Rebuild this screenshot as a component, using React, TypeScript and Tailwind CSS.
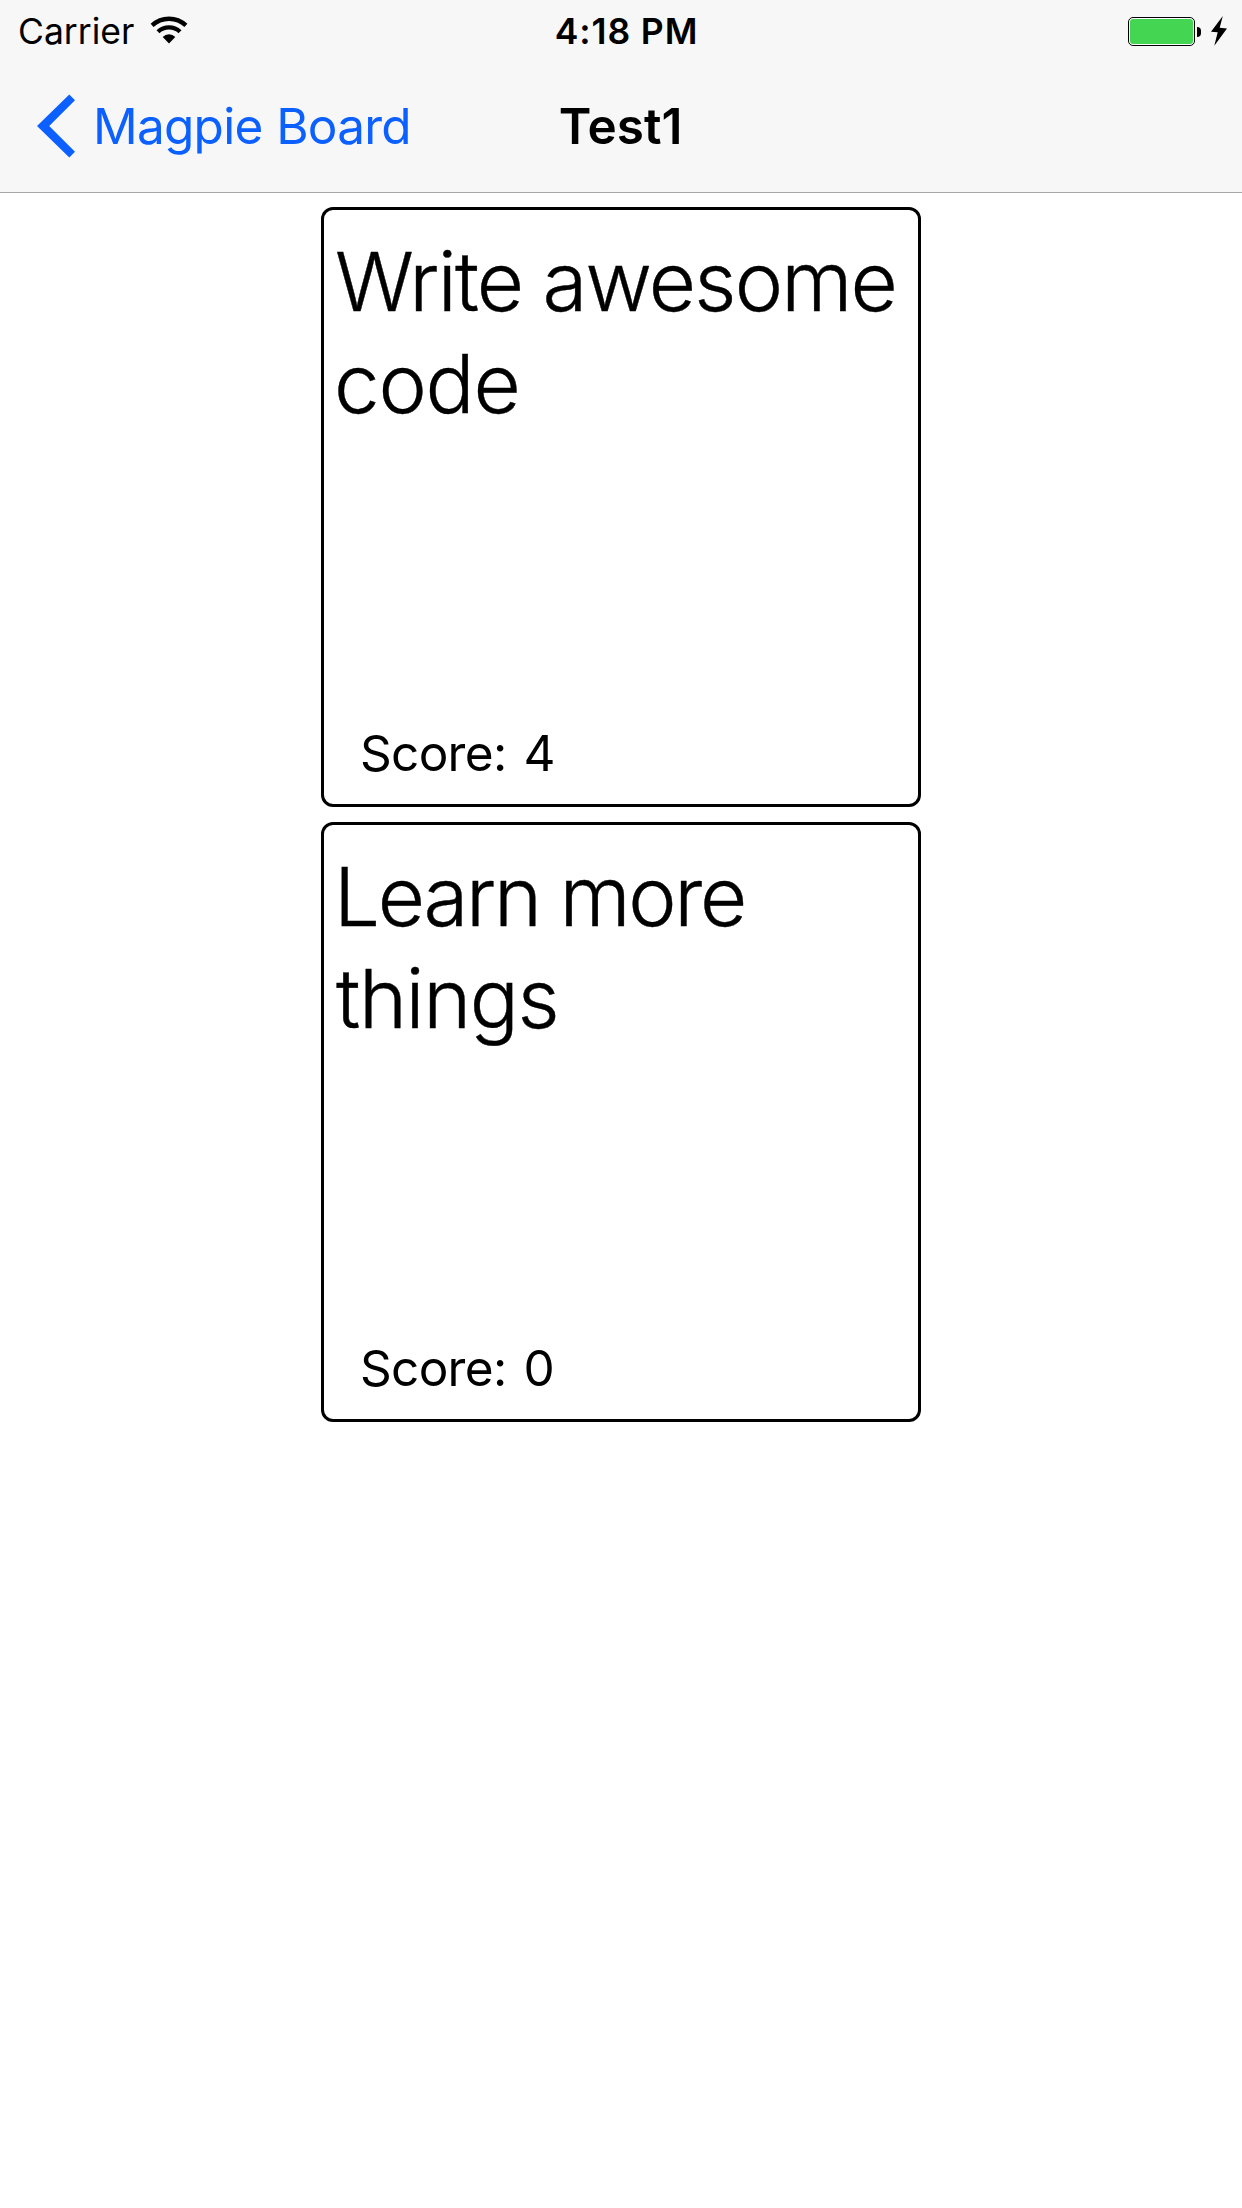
import React from 'react';

function WifiIcon() {
  return (
    <svg className="mb-[2px] ml-[15.5px] h-[28px] w-[38px]" viewBox="0 0 38 28" fill="none">
      <path d="M2.1 9.4A24.8 24.8 0 0 1 35.9 9.4" stroke="#000" strokeWidth="4.3" />
      <path d="M8 15.7A16.1 16.1 0 0 1 30 15.7" stroke="#000" strokeWidth="4.3" />
      <path d="M12.7 20.9A9 9 0 0 1 25.3 20.9L19 27.5Z" fill="#000" />
    </svg>
  );
}

function Battery() {
  return (
    <div className="flex h-[30px] items-start">
      <div className="mt-px h-[29px] w-[67px] rounded-[5px] border border-black bg-white p-px">
        <div className="h-full w-full rounded-[3px] bg-[#44d553]" />
      </div>
      <div className="mt-[11px] ml-[2px] h-[10px] w-[4px] rounded-r-full bg-black" />
      <svg className="ml-[10px] h-[30px] w-[16px]" viewBox="0 0 16 30">
        <path d="M11.8 0 0 15.8 6.7 16.3 3.3 29.8 16 12.4 8.7 11.7Z" fill="#000" />
      </svg>
    </div>
  );
}

function StatusBar() {
  return (
    <div className="grid h-[60px] grid-cols-[1fr_auto_1fr] items-center text-[35.5px] leading-[60px]">
      <div className="flex items-center pl-[18px]">
        <span className="pt-[2px]">Carrier</span>
        <WifiIcon />
      </div>
      <div className="pt-[2px] pl-[11px] font-[570] tracking-[0.9px]">4:18 PM</div>
      <div className="flex items-center justify-end pr-[15px]">
        <Battery />
      </div>
    </div>
  );
}

function NavBar() {
  return (
    <div className="grid h-[132px] grid-cols-[1fr_auto_1fr] items-center text-[49.5px] leading-[132px]">
      <button className="flex items-center pl-[37px] text-[#0b60ff]">
        <svg className="h-[64px] w-[38px]" viewBox="0 0 38 64">
          <path d="M32.3 0.5 38 6.2 12.2 32 38 57.8 32.3 63.5 0 32Z" fill="currentColor" />
        </svg>
        <span className="ml-[18px] tracking-[-0.75px] [word-spacing:0.5px]">Magpie Board</span>
      </button>
      <h1 className="-ml-px font-semibold">Test1</h1>
      <div />
    </div>
  );
}

type Line = { text: string; spacing: string };

function Card({ lines, score }: { lines: Line[]; score: number }) {
  return (
    <div className="flex h-[600px] w-[600px] flex-col justify-between rounded-[12px] border-[3px] border-black bg-white pt-[21px] pb-[21px]">
      <div className="pl-[11px] text-[81.6px] leading-[102px] font-light whitespace-nowrap [-webkit-text-stroke:0.4px_black]">
        {lines.map((l) => (
          <div key={l.text} className={l.spacing}>
            {l.text}
          </div>
        ))}
      </div>
      <div className="pl-[36px] text-[49.5px] leading-[60px] tracking-[-0.7px] [word-spacing:3.8px]">Score: {score}</div>
    </div>
  );
}

export default function App() {
  return (
    <div className="min-h-[2208px] w-full bg-white font-['Inter',sans-serif] text-black">
      <header className="border-b border-[#a7a7aa] bg-[#f7f7f7]">
        <StatusBar />
        <NavBar />
      </header>
      <main className="flex flex-col items-center gap-[15px] pt-[14px]">
        <Card
          lines={[
            { text: 'Write awesome', spacing: 'tracking-[-1.8px] [word-spacing:-0.8px]' },
            { text: 'code', spacing: '-ml-px tracking-[-1.2px]' },
          ]}
          score={4}
        />
        <Card
          lines={[
            { text: 'Learn more', spacing: '-ml-px tracking-[-2.3px] [word-spacing:-0.9px]' },
            { text: 'things', spacing: 'pl-px tracking-[-1.4px]' },
          ]}
          score={0}
        />
      </main>
    </div>
  );
}
